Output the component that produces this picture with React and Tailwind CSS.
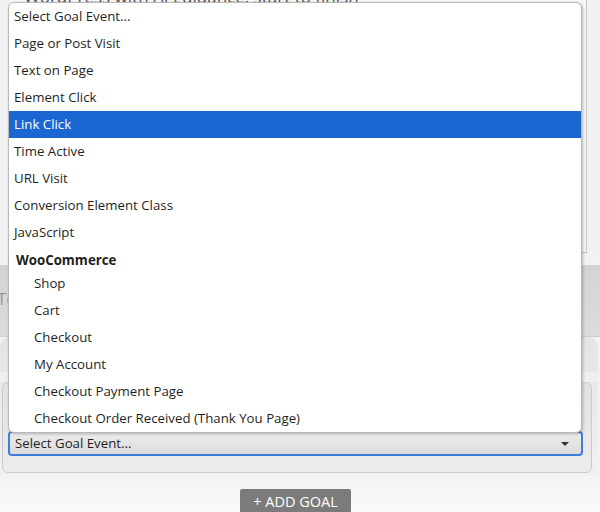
import React from 'react';

const options = [
  'Page or Post Visit',
  'Text on Page',
  'Element Click',
  'Link Click',
  'Time Active',
  'URL Visit',
  'Conversion Element Class',
  'JavaScript',
];

const wooOptions = [
  'Shop',
  'Cart',
  'Checkout',
  'My Account',
  'Checkout Payment Page',
  'Checkout Order Received (Thank You Page)',
];

const font = { fontFamily: '"Open Sans", "Noto Sans", sans-serif' };

const GoalDropdown = () => (
  <div className="absolute left-[8px] top-[2px] w-[574px] h-[431px] bg-white rounded-[6px] border border-[#b9b9b9] shadow-[1px_1px_3px_rgba(0,0,0,0.25)] overflow-hidden text-[13.25px] text-[#1f1f1f]">
    <div className="h-[27px] flex items-center px-[5px] pt-px">Select Goal Event...</div>
    {options.map((label) => (
      <div
        key={label}
        className={`h-[27px] flex items-center px-[5px] pt-px ${
          label === 'Link Click' ? 'bg-[#1a67d2] text-white' : ''
        }`}
      >
        {label}
      </div>
    ))}
    <div className="h-[24px] flex items-center px-[7px] pt-[5px] font-bold">WooCommerce</div>
    {wooOptions.map((label) => (
      <div key={label} className="h-[27px] flex items-center pl-[25px] pt-px">
        {label}
      </div>
    ))}
  </div>
);

export default function App() {
  return (
    <div className="relative w-[600px] h-[512px] overflow-hidden bg-[#f2f2f2]" style={font}>
      {/* Intro card with textarea */}
      <div className="h-[263px] mr-[2px] bg-[#f1f1f1] rounded-b-[10px] flex flex-col">
        <div className="h-[253px] ml-[10px] mr-[11px] border-b border-r border-[#c6c6c6] bg-[#f7f7f7] px-[14px] overflow-hidden">
          <p className="-mt-[16px] text-[17px] text-[#555]">WordPress with AI guidance, start to finish</p>
        </div>
      </div>

      {/* Title input band */}
      <div className="h-[72px] mt-[2px] bg-gradient-to-b from-[#d3d3d3] to-[#dcdcdc] border-b border-[#cfcfcf] flex items-center">
        <span className="-ml-[3px] -mt-[4px] text-[17px] text-[#9a9a9a]">Test goal</span>
      </div>

      {/* Goals card */}
      <div className="h-[138px] mr-[2px] rounded-t-[10px] bg-gradient-to-b from-[#e4e4e4] to-[#f1f1f1] flex flex-col">
        <div className="h-[35px]" />
        <div className="h-[10px] bg-[#efefef]" />
        <div className="h-[91px] ml-[2px] mr-[6px] border border-[#cacaca] rounded-[6px] bg-gradient-to-b from-[#e2e2e2] to-[#ececec] flex flex-col justify-end pb-[16px] pl-[5px] pr-[8px]">
          <div className="h-[25px] rounded-[4px] border-2 border-[#3f7fdc] bg-gradient-to-b from-[#ececec] to-[#dcdcdc] flex items-center justify-between px-[5px] text-[13.25px] text-[#1f1f1f]">
            <span>Select Goal Event...</span>
            <svg width="10" height="6" viewBox="0 0 10 6" className="mr-[6px]">
              <path d="M1 1h8L5 5z" fill="#333" />
            </svg>
          </div>
        </div>
      </div>

      {/* Add goal */}
      <div className="h-[39px] bg-gradient-to-b from-[#f3f3f3] to-[#fafafa] flex items-end justify-center">
        <button className="mr-[9px] w-[111px] h-[25px] bg-[#7b7b7b] text-white text-[14.5px] rounded-t-[2px]">
          + ADD GOAL
        </button>
      </div>

      <GoalDropdown />
    </div>
  );
}
